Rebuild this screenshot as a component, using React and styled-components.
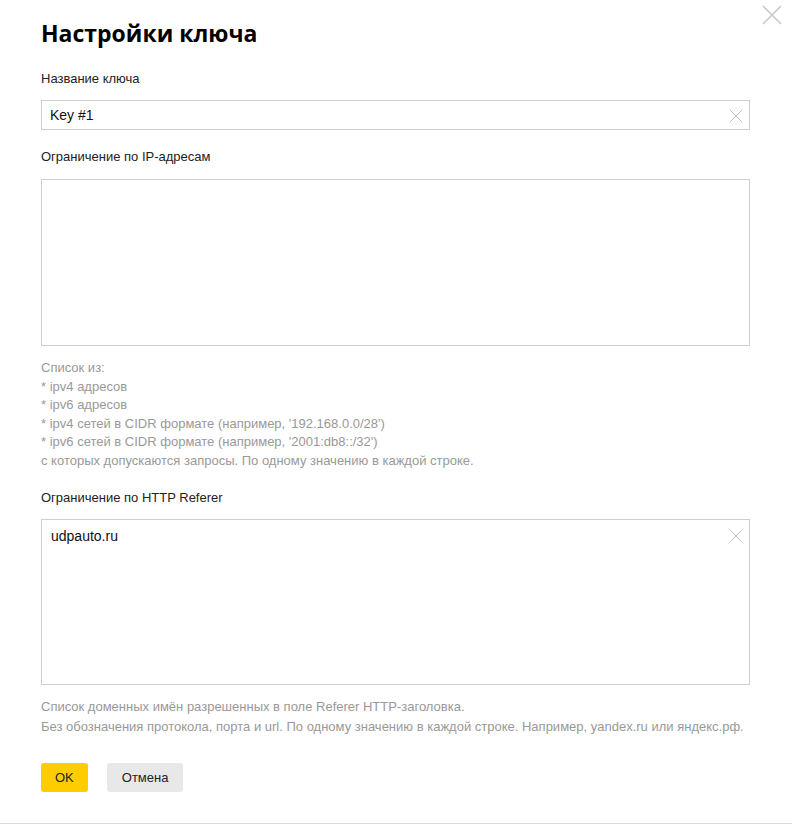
import React from 'react';
import styled, { createGlobalStyle } from 'styled-components';

const GlobalStyle = createGlobalStyle`
  html, body {
    margin: 0;
    padding: 0;
    background: #fff;
  }
  body {
    font-family: 'Liberation Sans', Arial, sans-serif;
  }
`;

const Modal = styled.div`
  position: relative;
  box-sizing: border-box;
  width: 792px;
  height: 824px;
  padding: 18px 42px 0 41px;
  border-bottom: 1px solid #d9d9d9;
  background: #fff;
`;

const CloseButton = styled.button`
  position: absolute;
  top: 5px;
  right: 10px;
  width: 20px;
  height: 20px;
  padding: 0;
  border: 0;
  background: none;
  cursor: pointer;
`;

const Title = styled.h1`
  margin: 0;
  font-family: 'Open Sans', Arial, sans-serif;
  font-size: 23px;
  line-height: 30px;
  font-weight: 700;
  color: #000;
`;

const Label = styled.div`
  margin-top: ${p => p.$top}px;
  font-size: 13px;
  line-height: 18px;
  color: #222;
`;

const Field = styled.div`
  position: relative;
  box-sizing: border-box;
  margin-top: ${p => p.$top || 12}px;
  height: ${p => p.$height}px;
  border: 1px solid #cfcfcf;
  padding: ${p => (p.$multi ? '8px 40px 0 9px' : '0 40px 0 8px')};
  display: flex;
  align-items: ${p => (p.$multi ? 'flex-start' : 'center')};
  font-size: 14px;
  line-height: 17px;
  color: #111;
`;

const ClearIcon = styled.span`
  position: absolute;
  right: 6px;
  top: ${p => (p.$multi ? '9px' : '8px')};
  width: 14px;
  height: 14px;
  display: flex;
`;

const Hint = styled.div`
  margin-top: ${p => p.$top}px;
  font-size: 13px;
  line-height: ${p => p.$lh}px;
  color: #999;
`;

const Buttons = styled.div`
  display: flex;
  gap: 19px;
  margin-top: 26px;
`;

const Button = styled.button`
  height: 29px;
  padding: 0 ${p => p.$pad}px;
  border: 0;
  border-radius: 3px;
  background: ${p => (p.$primary ? '#ffcc00' : '#e8e8e8')};
  font-family: 'Liberation Sans', Arial, sans-serif;
  font-size: 13px;
  color: #222;
  cursor: pointer;
`;

const Cross = ({ size, color, width }) => (
  <svg width={size} height={size} viewBox="0 0 20 20">
    <path d="M1 1L19 19M19 1L1 19" stroke={color} strokeWidth={width} fill="none" />
  </svg>
);

const App = () => {
  return (
    <>
      <GlobalStyle />
      <Modal>
        <CloseButton>
          <Cross size={20} color="#c8c8c8" width={1.6} />
        </CloseButton>
        <Title>Настройки ключа</Title>

        <Label $top={22}>Название ключа</Label>
        <Field $height={30}>
          Key #1
          <ClearIcon>
            <Cross size={14} color="#a8a8a8" width={1.1} />
          </ClearIcon>
        </Field>

        <Label $top={18}>Ограничение по IP-адресам</Label>
        <Field $top={13} $height={167} $multi />
        <Hint $top={13} $lh={18.5}>
          Список из:
          <br />* ipv4 адресов
          <br />* ipv6 адресов
          <br />* ipv4 сетей в CIDR формате (например, '192.168.0.0/28')
          <br />* ipv6 сетей в CIDR формате (например, '2001:db8::/32')
          <br />с которых допускаются запросы. По одному значению в каждой строке.
        </Hint>

        <Label $top={19}>Ограничение по HTTP Referer</Label>
        <Field $height={166} $multi>
          udpauto.ru
          <ClearIcon $multi>
            <Cross size={14} color="#a8a8a8" width={1.1} />
          </ClearIcon>
        </Field>
        <Hint $top={12} $lh={20}>
          Список доменных имён разрешенных в поле Referer HTTP-заголовка.
          <br />
          Без обозначения протокола, порта и url. По одному значению в каждой строке. Например, yandex.ru или яндекс.рф.
        </Hint>

        <Buttons>
          <Button $primary $pad={14}>OK</Button>
          <Button $pad={15}>Отмена</Button>
        </Buttons>
      </Modal>
    </>
  );
};

export default App;
